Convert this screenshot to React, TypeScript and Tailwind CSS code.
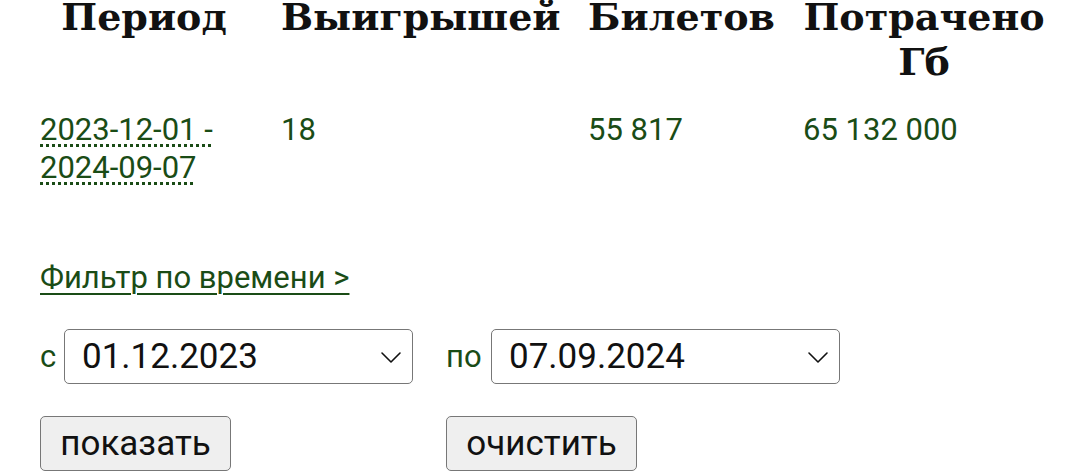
import React from "react";

const green = "text-[#1a4c16]";

function Chevron() {
  return (
    <svg width="22" height="14" viewBox="0 0 22 14" fill="none" className="shrink-0">
      <path d="M2 3l9 9 9-9" stroke="#111" strokeWidth="1.6" strokeLinecap="round" strokeLinejoin="round" />
    </svg>
  );
}

function DateSelect({ value }: { value: string }) {
  return (
    <div className="flex h-[55px] w-[349px] shrink-0 items-center justify-between rounded-[5px] border-[1.5px] border-[#777] bg-white pl-[17px] pr-[10px]">
      <span className="text-[35px] leading-none text-[#111]">{value}</span>
      <Chevron />
    </div>
  );
}

export default function App() {
  return (
    <div className="min-h-[473px] w-[1080px] overflow-hidden bg-white pl-[40px] font-['Roboto',sans-serif]">
      <div className="grid grid-cols-[208px_274px_182px_242px] gap-x-[33px]">
        {["Период", "Выигрышей", "Билетов", "Потрачено Гб"].map((h) => (
          <div
            key={h}
            className="mt-[-6px] text-center font-['DejaVu_Serif',serif] text-[38px] font-bold leading-[45px] text-[#111]"
          >
            {h}
          </div>
        ))}
        <div className={`mt-[27px] text-[31px] leading-[38px] ${green}`}>
          <span className="underline decoration-dotted decoration-[3px] underline-offset-[4px]">
            2023-12-01 - 2024-09-07
          </span>
        </div>
        <div className={`mt-[27px] text-[31px] leading-[38px] ${green}`}>18</div>
        <div className={`mt-[27px] text-[31px] leading-[38px] ${green}`}>55 817</div>
        <div className={`mt-[27px] text-[31px] leading-[38px] ${green}`}>65 132 000</div>
      </div>

      <div className="mt-[72px]">
        <a href="#" className={`text-[31px] leading-[38px] underline decoration-[2px] underline-offset-[5px] ${green}`}>
          Фильтр по времени &gt;
        </a>
      </div>

      <div className="mt-[32px] flex items-center">
        <span className={`w-[24px] shrink-0 text-[31px] leading-none ${green}`}>с</span>
        <DateSelect value="01.12.2023" />
        <span className={`ml-[33px] w-[45px] shrink-0 text-[31px] leading-none ${green}`}>по</span>
        <DateSelect value="07.09.2024" />
      </div>

      <div className="mt-[32px] flex">
        <button className="flex h-[55px] w-[191px] items-center justify-center rounded-[5px] border-[1.5px] border-[#777] bg-[#efefef] text-[35px] leading-none text-[#111]">
          показать
        </button>
        <button className="ml-[215px] flex h-[55px] w-[191px] items-center justify-center rounded-[5px] border-[1.5px] border-[#777] bg-[#efefef] text-[35px] leading-none text-[#111]">
          очистить
        </button>
      </div>
    </div>
  );
}
